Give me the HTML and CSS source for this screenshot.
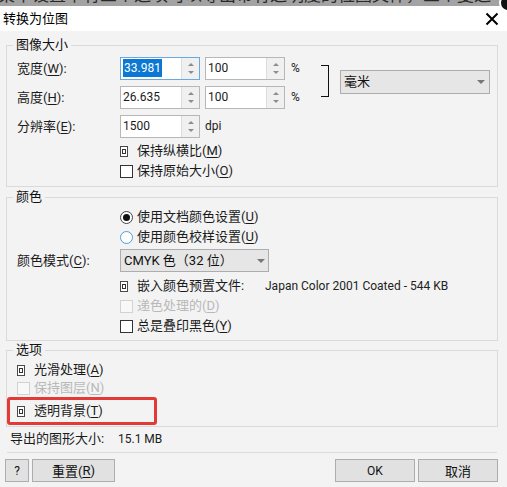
FILE: index.html
```html
<!DOCTYPE html>
<html lang="zh-CN">

<head>
    <meta charset="UTF-8">
    <meta name="viewport" content="width=device-width, initial-scale=1.0">
    <title>转换为位图</title>
    <link rel="stylesheet" href="styles.css">
</head>

<body>
    <!-- page behind the dialog, only its last line shows -->
    <div class="backdrop">
        <div class="backdrop-text">菜单设置中有三个选项可以导出带有透明度的位图文件，三个复选</div>
    </div>

    <div class="titlebar">
        <span class="title">转换为位图</span>
        <svg class="close" viewBox="0 0 14 14" width="14" height="14">
            <path d="M1.5 1.5 L12.5 12.5 M12.5 1.5 L1.5 12.5" />
        </svg>
        <span class="cursor"></span>
    </div>

    <div class="dialog">
        <!-- 图像大小 -->
        <fieldset class="group size">
            <legend>图像大小</legend>
            <div class="size-grid">
                <span class="lbl">宽度(<u>W</u>):</span>
                <div class="spin focus">
                    <span class="val"><span class="sel">33.981</span></span>
                    <span class="arrows"><i class="up"></i><i class="down"></i></span>
                </div>
                <div class="spin">
                    <span class="val">100</span>
                    <span class="arrows"><i class="up"></i><i class="down"></i></span>
                </div>
                <span class="unit">%</span>
                <span class="bracket"></span>
                <div class="combo unitsel">毫米<span class="caret"></span></div>

                <span class="lbl">高度(<u>H</u>):</span>
                <div class="spin">
                    <span class="val">26.635</span>
                    <span class="arrows"><i class="up"></i><i class="down"></i></span>
                </div>
                <div class="spin">
                    <span class="val">100</span>
                    <span class="arrows"><i class="up"></i><i class="down"></i></span>
                </div>
                <span class="unit">%</span>

                <span class="lbl">分辨率(<u>E</u>):</span>
                <div class="spin">
                    <span class="val">1500</span>
                    <span class="arrows"><i class="up"></i><i class="down"></i></span>
                </div>
                <span class="unit">dpi</span>
            </div>
            <div class="checks size-checks">
                <div class="check"><span class="box part"><i></i></span>保持纵横比(<u>M</u>)</div>
                <div class="check"><span class="box"></span>保持原始大小(<u>O</u>)</div>
            </div>
        </fieldset>

        <!-- 颜色 -->
        <fieldset class="group color">
            <legend>颜色</legend>
            <div class="checks">
                <div class="check"><span class="radio on"></span>使用文档颜色设置(<u>U</u>)</div>
                <div class="check"><span class="radio hot"></span>使用颜色校样设置(<u>U</u>)</div>
            </div>
            <div class="field-row">
                <span class="lbl">颜色模式(<u>C</u>):</span>
                <div class="combo mode">CMYK 色（32 位）<span class="caret"></span></div>
            </div>
            <div class="checks color-checks">
                <div class="check">
                    <span class="box part"><i></i></span>
                    <span class="profile-lbl">嵌入颜色预置文件:</span>
                    <span class="en profile">Japan Color 2001 Coated - 544 KB</span>
                </div>
                <div class="check off"><span class="box"></span>递色处理的(<u>D</u>)</div>
                <div class="check"><span class="box"></span>总是叠印黑色(<u>Y</u>)</div>
            </div>
        </fieldset>

        <!-- 选项 -->
        <fieldset class="group options">
            <legend>选项</legend>
            <div class="check short"><span class="box part"><i></i></span>光滑处理(<u>A</u>)</div>
            <div class="check short off"><span class="box"></span>保持图层(<u>N</u>)</div>
            <div class="check marked"><span class="box part"><i></i></span>透明背景(<u>T</u>)</div>
        </fieldset>

        <div class="export">
            <span class="export-lbl">导出的图形大小:</span>
            <span class="en">15.1 MB</span>
        </div>

        <div class="sep"></div>

        <div class="buttons">
            <button class="btn help en">?</button>
            <button class="btn reset">重置(<u>R</u>)</button>
            <button class="btn ok en">OK</button>
            <button class="btn cancel">取消</button>
        </div>
    </div>
</body>

</html>
```

FILE: styles.css
```css
* {
    box-sizing: border-box;
}

body {
    margin: 0;
    width: 507px;
    height: 487px;
    overflow: hidden;
    background: #f3f3f3;
    font-family: Roboto, "Noto Sans CJK SC", sans-serif;
    font-size: 13px;
    line-height: 20px;
    color: #1b1b1b;
}

u {
    text-underline-offset: 2px;
}

/* latin-only runs use the smaller ui size */
.en,
.val,
.unit {
    font-size: 12px;
}

/* strip of the window underneath */
.backdrop {
    height: 6px;
    overflow: hidden;
    background: #a3a3a3;
}

.backdrop-text {
    margin: -13px 0 0 -2px;
    font-size: 17px;
    line-height: 17px;
    white-space: nowrap;
    color: #2a2a2a;
}

/* title bar */
.titlebar {
    position: relative;
    height: 25px;
    background: #fff;
    display: flex;
    align-items: center;
    justify-content: space-between;
    padding: 0 8px 0 3px;
}

.title {
    color: #000;
}

.close {
    stroke: #000;
    stroke-width: 2;
    fill: none;
}

.cursor {
    position: absolute;
    top: -12px;
    right: -10px;
    width: 18px;
    height: 18px;
    border-radius: 50%;
    background: #111;
    border: 2px solid #fff;
}

/* dialog body */
.dialog {
    padding: 7px 9px 0 6px;
}

.group {
    margin: 0;
    min-inline-size: 0;
    border: 1px solid #dadada;
    padding: 5px 0 5px 10px;
}

.group legend {
    padding: 0 3px;
    margin-left: -4px;
    line-height: 14px;
    color: #111;
}

.color {
    margin-top: 3px;
    padding: 3px 0 4px 10px;
}

.options {
    margin-top: 2px;
    padding: 4px 0 1px 10px;
}

.lbl {
    line-height: 23px;
}

.size-grid {
    display: grid;
    grid-template-columns: 103px 85px 86px 30px 19px 150px;
    grid-template-rows: repeat(3, 23px);
    row-gap: 6px;
    align-items: center;
}

/* spin boxes */
.spin {
    display: flex;
    width: 80px;
    height: 23px;
    border: 1px solid #b7b7b7;
    background: #fff;
}

.spin.focus {
    border-color: #6aa8e2;
}

.spin .val {
    flex: 1;
    padding-left: 2px;
    line-height: 21px;
}

.sel {
    background: #0a78d4;
    color: #fff;
    padding: 2px 1px;
}

.arrows {
    width: 18px;
    background: #f0f0f0;
    border-left: 1px solid #dcdcdc;
    display: flex;
    flex-direction: column;
    justify-content: space-around;
    align-items: center;
    padding: 2px 0;
}

.up,
.down {
    width: 0;
    height: 0;
    border-left: 3px solid transparent;
    border-right: 3px solid transparent;
}

.up {
    border-bottom: 3px solid #8c8c8c;
}

.down {
    border-top: 3px solid #8c8c8c;
}

.unit {
    line-height: 23px;
}

.bracket {
    grid-column: 5;
    grid-row: 1 / 3;
    align-self: center;
    width: 8px;
    height: 32px;
    margin-top: -5px;
    border: 1px solid #111;
    border-left: 0;
}

/* drop-down boxes */
.combo {
    display: flex;
    align-items: center;
    justify-content: space-between;
    height: 24px;
    border: 1px solid #adadad;
    background: #e6e6e6;
    padding: 0 4px 0 3px;
    color: #111;
}

.unitsel {
    grid-column: 6;
    grid-row: 1 / 3;
    align-self: center;
    margin-top: -2px;
}

.caret {
    width: 0;
    height: 0;
    border-left: 4px solid transparent;
    border-right: 4px solid transparent;
    border-top: 4px solid #777;
}

.field-row {
    display: flex;
    align-items: center;
    margin-top: 2px;
}

.field-row .lbl {
    width: 103px;
}

.mode {
    width: 149px;
    height: 23px;
    padding-right: 3px;
}

/* check boxes and radios */
.checks {
    margin-left: 103px;
}

.size-checks {
    margin-top: 3px;
}

.color-checks {
    margin-top: 4px;
}

.check {
    display: flex;
    align-items: center;
    height: 20px;
    white-space: nowrap;
}

.check.short {
    height: 18px;
}

.check.off {
    color: #b9b9b9;
}

.box {
    flex: none;
    width: 13px;
    height: 13px;
    margin-right: 4px;
    border: 1px solid #333;
    background: #fff;
}

.off .box {
    border-color: #d2d2d2;
    background: #f8f8f8;
}

/* half drawn box, tri-state look */
.box.part {
    width: 8px;
    height: 11px;
    margin-right: 9px;
    border-color: #4a4a4a;
    padding: 2px 0 0 1px;
}

.box.part i {
    display: block;
    width: 4px;
    height: 5px;
    border: 1px solid #333;
    background: #fff;
}

.radio {
    flex: none;
    width: 13px;
    height: 13px;
    margin-right: 4px;
    border-radius: 50%;
    border: 1px solid #444;
    background: #fff;
    display: flex;
    align-items: center;
    justify-content: center;
}

.radio.on::before {
    content: "";
    width: 7px;
    height: 7px;
    border-radius: 50%;
    background: #111;
}

.radio.hot {
    border-color: #4aa2dc;
}

.profile-lbl {
    width: 128px;
}

.profile {
    color: #222;
}

/* highlighted row */
.check.marked {
    margin-left: -10px;
    width: 150px;
    height: 28px;
    padding-left: 7px;
    border: 3px solid #e23a36;
    border-radius: 3px;
}

/* bottom */
.export {
    display: flex;
    margin: 2px 0 0 4px;
}

.export-lbl {
    width: 108px;
}

.sep {
    height: 1px;
    background: #dcdcdc;
    margin: 3px 1px 0;
}

.buttons {
    display: flex;
    gap: 3px;
    margin: 6px 0 0 -1px;
}

.btn {
    height: 23px;
    padding: 0;
    border: 1px solid #adadad;
    background: #e1e1e1;
    font-family: inherit;
    font-size: 13px;
    color: #111;
    display: flex;
    align-items: center;
    justify-content: center;
}

.btn.en {
    font-size: 12px;
}

.help {
    width: 24px;
}

.reset {
    width: 83px;
}

.ok {
    width: 80px;
    margin-left: auto;
}

.cancel {
    width: 80px;
}
```
